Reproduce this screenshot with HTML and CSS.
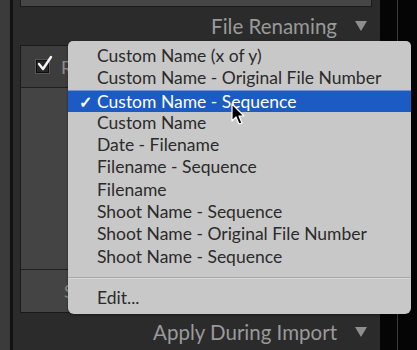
FILE: index.html
```html
<!DOCTYPE html>
<html lang="en">
<head>
  <meta charset="UTF-8" />
  <title>File Renaming</title>
  <link rel="stylesheet" href="styles.css">
</head>
<body>

  <div class="app">
    <div class="edge"></div>

    <!-- IMPORT PANEL -->
    <div class="panel">
      <div class="top-box"></div>

      <div class="section-head">
        <span>File Renaming</span>
        <span class="tri"></span>
      </div>

      <div class="box">
        <div class="row row-check">
          <span class="checkbox">
            <svg width="18" height="18" viewBox="0 0 18 18">
              <path d="M3 9 L7 14 L15 2" fill="none" stroke="#f4f4f4" stroke-width="2.4" stroke-linecap="round" stroke-linejoin="round"/>
            </svg>
          </span>
          <span class="label">Rename</span>
        </div>
        <div class="row row-tall"></div>
        <div class="row row-short">
          <span class="label">S</span>
        </div>
      </div>

      <div class="section-head">
        <span>Apply During Import</span>
        <span class="tri"></span>
      </div>
    </div>

    <div class="rail"><div class="rail-line"></div></div>
  </div>

  <!-- TEMPLATE MENU -->
  <div class="menu">
    <div class="item">Custom Name (x of y)</div>
    <div class="item">Custom Name - Original File Number</div>
    <div class="item selected"><span class="tick">✓</span>Custom Name - Sequence</div>
    <div class="item">Custom Name</div>
    <div class="item">Date - Filename</div>
    <div class="item">Filename - Sequence</div>
    <div class="item">Filename</div>
    <div class="item">Shoot Name - Sequence</div>
    <div class="item">Shoot Name - Original File Number</div>
    <div class="item">Shoot Name - Sequence</div>
    <div class="sep"></div>
    <div class="item">Edit...</div>
  </div>

  <svg class="cursor" width="16" height="24" viewBox="0 0 16 24">
    <path d="M1 1 L1 18 L5 14 L8 21 L11 20 L8 13 L13 13 Z" fill="#000" stroke="#fff" stroke-width="1.2" stroke-linejoin="round"/>
  </svg>

</body>
</html>
```

FILE: styles.css
```css
body {
  margin: 0;
  background-color: #2a2a2a;
  font-family: Lato, "Open Sans", sans-serif;
  overflow: hidden;
}

.app {
  display: flex;
  height: 350px;
}

.edge {
  width: 10px;
  background-color: #3b3b3b;
  border-right: 3px solid #121212;
}

/* Panel */
.panel {
  width: 367px;
  background-color: #2b2b2b;
  padding: 0 8px 0 7px;
  box-sizing: border-box;
}

.top-box {
  height: 6px;
  background-color: #464646;
  border: 1px solid #1c1c1c;
  border-top: none;
}

.section-head {
  display: flex;
  justify-content: flex-end;
  align-items: center;
  gap: 18px;
  height: 38px;
  padding-right: 5px;
  color: #9a9a9a;
  font-size: 20.5px;
}

.tri {
  width: 0;
  height: 0;
  border-left: 6px solid transparent;
  border-right: 6px solid transparent;
  border-top: 10px solid #8e8e8e;
}

.box {
  border: 1px solid #1a1a1a;
  background-color: #3d3d3d;
}

.row {
  display: flex;
  align-items: center;
  padding-left: 15px;
  color: #8c8c8c;
  font-size: 18px;
}

.row-check {
  height: 41px;
  gap: 12px;
}

.row-tall {
  height: 181px;
  border-top: 1px solid #1f1f1f;
  background-color: #444;
}

.row-short {
  height: 42px;
  border-top: 1px solid #1f1f1f;
  background-color: #444;
  padding-left: 43px;
}

.checkbox {
  position: relative;
  width: 11px;
  height: 11px;
  border: 1px solid #0e0e0e;
  background-color: #262626;
  box-shadow: 0 0 0 1px #555;
}

.checkbox svg {
  position: absolute;
  left: -1px;
  top: -6px;
}

.rail {
  flex: 1;
  background-color: #050505;
  padding-left: 17px;
}

.rail-line {
  width: 1px;
  height: 100%;
  background-color: #3a3a3a;
}

/* Menu */
.menu {
  position: absolute;
  left: 68px;
  top: 41px;
  width: 343px;
  height: 273px;
  box-sizing: border-box;
  padding-top: 4px;
  background-color: #c8c8c8;
  border-radius: 5px 5px 6px 6px;
  box-shadow: 0 1px 3px rgba(0, 0, 0, 0.4);
}

.item {
  position: relative;
  height: 22.3px;
  line-height: 22.3px;
  padding-left: 29px;
  color: #2b2b2b;
  font-size: 17.5px;
  white-space: nowrap;
}

.item.selected {
  background-color: #1c5bc3;
  border-top: 1px solid #6c96dc;
  height: 21.3px;
  line-height: 21.3px;
  color: #fff;
}

.tick {
  position: absolute;
  left: 11px;
  font-size: 16px;
  font-weight: bold;
}

.sep {
  height: 1px;
  margin: 9px 0 8px;
  background-color: #a9a9a9;
  border-bottom: 1px solid #d6d6d6;
}

.cursor {
  position: absolute;
  left: 231px;
  top: 103px;
}
```
